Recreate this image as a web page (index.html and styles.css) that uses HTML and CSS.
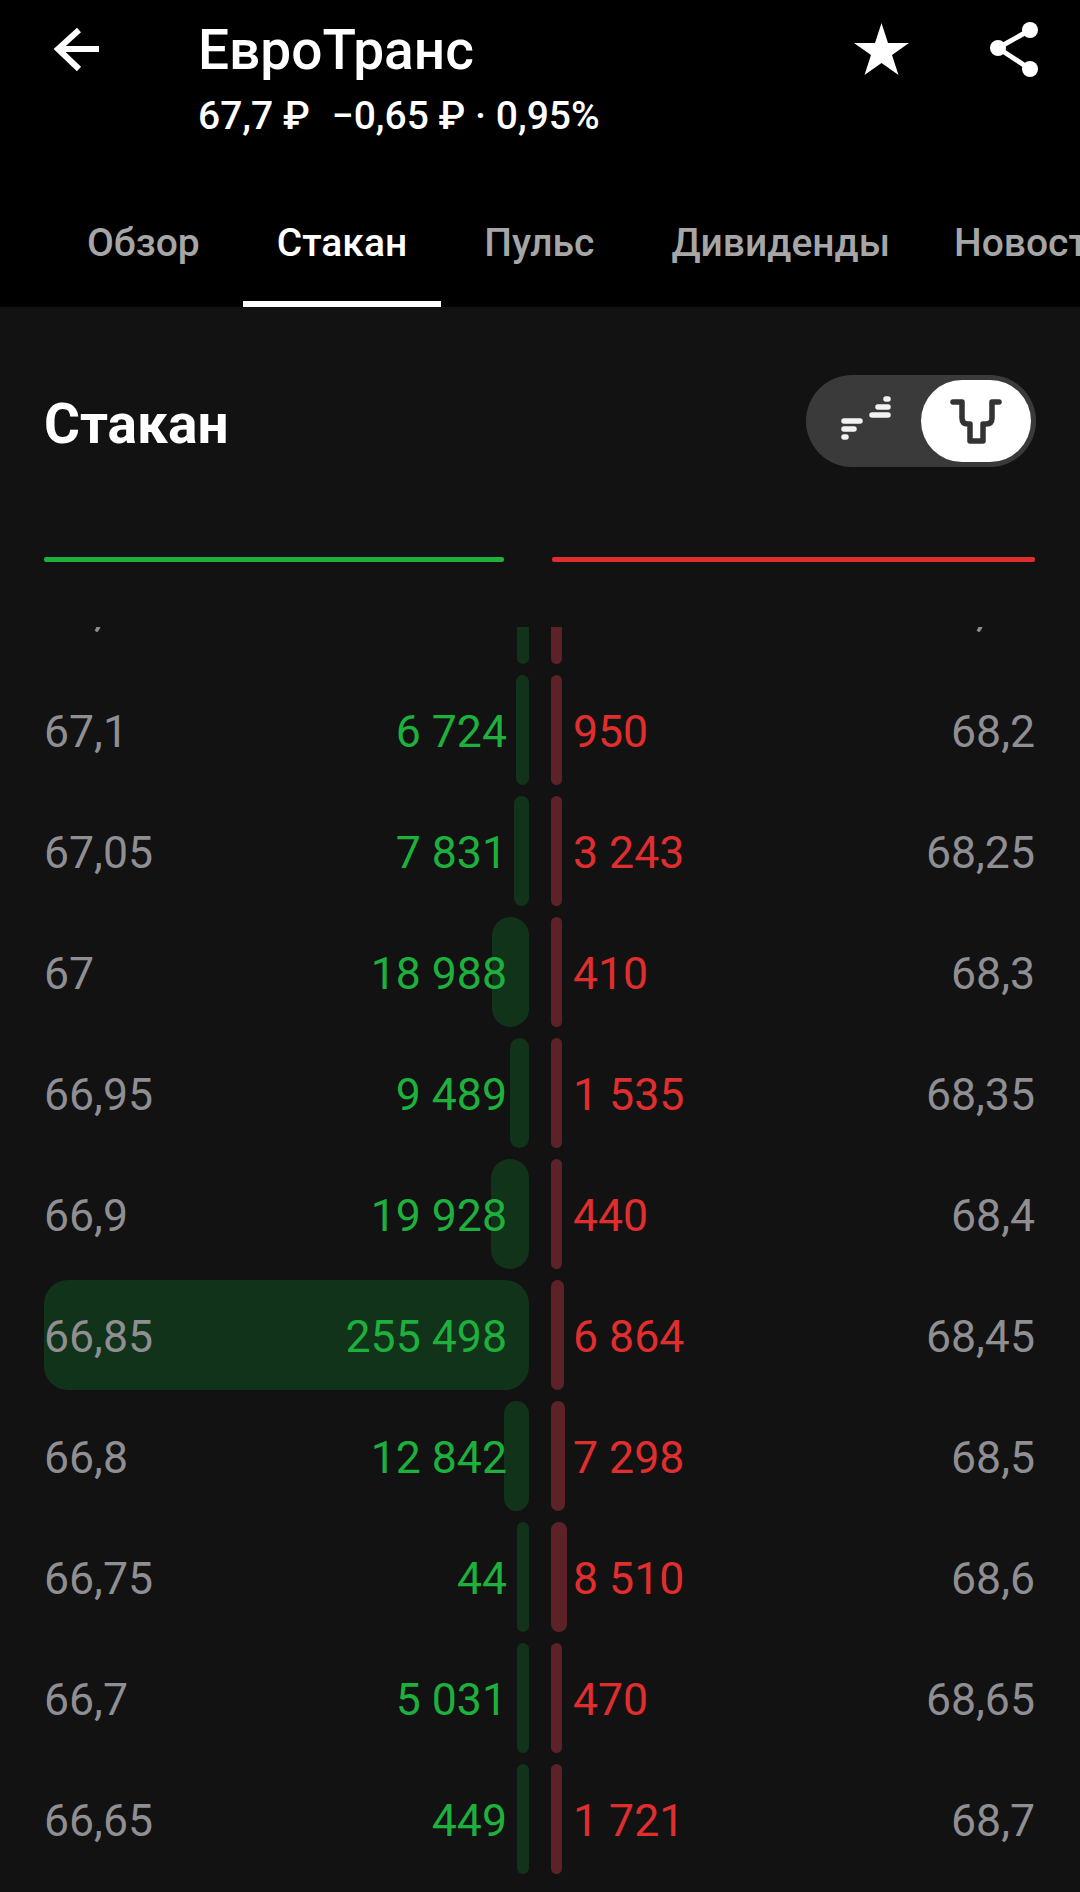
FILE: index.html
```html
<!DOCTYPE html>
<html lang="ru">
<head>
<meta charset="utf-8">
<title>ЕвроТранс — Стакан</title>
<link rel="stylesheet" href="styles.css">
</head>
<body>
<div class="page">
  <header class="header">
    <div class="top">
      <svg class="icon-back" viewBox="40 10 80 80" width="80" height="80"><path d="M99 49H58M79 30L58 49L79 69" fill="none" stroke="#fff" stroke-width="6"/></svg>
      <div class="heading">
        <div class="title">ЕвроТранс</div>
        <div class="sub"><span class="sub-price">67,7 ₽</span><span>−0,65 ₽ · 0,95%</span></div>
      </div>
      <div class="actions">
        <svg viewBox="844 10 76 80" width="76" height="80"><polygon points="881.5,23 888,43 909,43 892,55 898.5,75 881.5,63 864.5,75 871,55 854,43 875,43" fill="#fff"/></svg>
        <svg class="icon-share" viewBox="984 10 60 80" width="60" height="80"><path d="M1030 30L998 48L1030 69" fill="none" stroke="#fff" stroke-width="5"/><circle cx="1030" cy="30" r="8" fill="#fff"/><circle cx="998" cy="48" r="8" fill="#fff"/><circle cx="1030" cy="69" r="8" fill="#fff"/></svg>
      </div>
    </div>
    <nav class="tabs">
      <div class="tab">Обзор</div>
      <div class="tab tab-active">Стакан</div>
      <div class="tab">Пульс</div>
      <div class="tab tab-tight">Дивиденды</div>
      <div class="tab">Новости</div>
    </nav>
  </header>
  <main class="main">
    <div class="section-head">
      <h1 class="section-title">Стакан</h1>
      <div class="toggle">
        <div class="toggle-slot">
          <svg viewBox="836 396 60 50" width="60" height="50"><path d="M844 421H860M844 429H854M844 437H846M886 399H888M878 407H888M872 415H888" fill="none" stroke="#f2f2f2" stroke-width="5.5" stroke-linecap="round"/></svg>
        </div>
        <div class="toggle-knob">
          <svg viewBox="946 396 60 50" width="60" height="50"><path d="M953 402H962V418Q962 424 968 424H970V441H983V424H986Q992 424 992 418V402H999" fill="none" stroke="#333" stroke-width="5.5" stroke-linecap="round" stroke-linejoin="round"/></svg>
        </div>
      </div>
    </div>
    <div class="lines"><div class="line line-buy"></div><div class="line line-sell"></div></div>
    <div class="book">
      <div class="row row-first">
        <div class="side side-buy"><i class="bar bar-buy" style="width:12px"></i><span class="price">67,15</span><span class="qty"></span></div>
        <div class="side side-sell"><i class="bar bar-sell" style="width:11px"></i><span class="qty"></span><span class="price">68,15</span></div>
      </div>
      <div class="row">
        <div class="side side-buy"><i class="bar bar-buy" style="width:13px"></i><span class="price">67,1</span><span class="qty">6 724</span></div>
        <div class="side side-sell"><i class="bar bar-sell" style="width:11px"></i><span class="qty">950</span><span class="price">68,2</span></div>
      </div>
      <div class="row">
        <div class="side side-buy"><i class="bar bar-buy" style="width:15px"></i><span class="price">67,05</span><span class="qty">7 831</span></div>
        <div class="side side-sell"><i class="bar bar-sell" style="width:11px"></i><span class="qty">3 243</span><span class="price">68,25</span></div>
      </div>
      <div class="row">
        <div class="side side-buy"><i class="bar bar-buy" style="width:37px"></i><span class="price">67</span><span class="qty">18 988</span></div>
        <div class="side side-sell"><i class="bar bar-sell" style="width:11px"></i><span class="qty">410</span><span class="price">68,3</span></div>
      </div>
      <div class="row">
        <div class="side side-buy"><i class="bar bar-buy" style="width:19px"></i><span class="price">66,95</span><span class="qty">9 489</span></div>
        <div class="side side-sell"><i class="bar bar-sell" style="width:11px"></i><span class="qty">1 535</span><span class="price">68,35</span></div>
      </div>
      <div class="row">
        <div class="side side-buy"><i class="bar bar-buy" style="width:38px"></i><span class="price">66,9</span><span class="qty">19 928</span></div>
        <div class="side side-sell"><i class="bar bar-sell" style="width:11px"></i><span class="qty">440</span><span class="price">68,4</span></div>
      </div>
      <div class="row">
        <div class="side side-buy"><i class="bar bar-buy" style="width:485px"></i><span class="price">66,85</span><span class="qty">255 498</span></div>
        <div class="side side-sell"><i class="bar bar-sell" style="width:13px"></i><span class="qty">6 864</span><span class="price">68,45</span></div>
      </div>
      <div class="row">
        <div class="side side-buy"><i class="bar bar-buy" style="width:25px"></i><span class="price">66,8</span><span class="qty">12 842</span></div>
        <div class="side side-sell"><i class="bar bar-sell" style="width:14px"></i><span class="qty">7 298</span><span class="price">68,5</span></div>
      </div>
      <div class="row">
        <div class="side side-buy"><i class="bar bar-buy" style="width:12px"></i><span class="price">66,75</span><span class="qty">44</span></div>
        <div class="side side-sell"><i class="bar bar-sell" style="width:16px"></i><span class="qty">8 510</span><span class="price">68,6</span></div>
      </div>
      <div class="row">
        <div class="side side-buy"><i class="bar bar-buy" style="width:12px"></i><span class="price">66,7</span><span class="qty">5 031</span></div>
        <div class="side side-sell"><i class="bar bar-sell" style="width:11px"></i><span class="qty">470</span><span class="price">68,65</span></div>
      </div>
      <div class="row">
        <div class="side side-buy"><i class="bar bar-buy" style="width:12px"></i><span class="price">66,65</span><span class="qty">449</span></div>
        <div class="side side-sell"><i class="bar bar-sell" style="width:11px"></i><span class="qty">1 721</span><span class="price">68,7</span></div>
      </div>
    </div>
  </main>
</div>
</body>
</html>
```

FILE: styles.css
```css
* { box-sizing: border-box; }
html, body { margin: 0; padding: 0; background: #121212; }
.page { width: 1080px; height: 1892px; overflow: hidden; font-family: Roboto, "Noto Sans", sans-serif; color: #fff; }

.header { background: #000; height: 307px; }
.top { display: flex; height: 165px; padding: 10px 0 0 40px; }
.icon-back { flex: none; }
.heading { margin-left: 78px; }
.title { font-size: 55px; line-height: 60px; margin-top: 10px; font-weight: 500; }
.sub { display: flex; font-size: 39px; line-height: 42px; margin-top: 15px; font-weight: 500; }
.sub-price { margin-right: 22px; }
.actions { margin-left: auto; display: flex; padding-right: 36px; }
.actions svg { display: block; }
.icon-share { margin-left: 64px; }

.tabs { display: flex; height: 142px; padding-left: 53px; gap: 9px; overflow: hidden; }
.tab { flex: none; padding: 0 34px; height: 142px; line-height: 156px; font-size: 39px; font-weight: 500; color: #a6a6a6; }
.tab-active { color: #fff; border-bottom: 6px solid #fff; }
.tab-tight { padding-right: 21px; }

.main { padding: 68px 0 0; }
.section-head { display: flex; align-items: center; justify-content: space-between; padding: 0 44px; height: 92px; }
.section-title { margin: 6px 0 0; font-size: 55px; font-weight: 700; line-height: 60px; }
.toggle { display: flex; width: 230px; height: 92px; padding: 5px; border-radius: 46px; background: #3a3a3a; }
.toggle-slot { width: 110px; display: flex; align-items: center; justify-content: center; }
.toggle-knob { width: 110px; height: 82px; border-radius: 41px; background: #fff; display: flex; align-items: center; justify-content: center; }

.lines { display: flex; justify-content: space-between; padding: 0 45px 0 44px; margin-top: 90px; }
.line { height: 5px; border-radius: 2px; }
.line-buy { width: 460px; background: #1db03d; }
.line-sell { width: 483px; background: #e02e2e; }

.book { margin-top: 65px; height: 1265px; overflow: hidden; }
.row { display: flex; justify-content: space-between; height: 110px; margin-bottom: 11px; padding: 0 45px 0 44px; }
.row-first { margin-top: -73px; }
.side { position: relative; width: 485px; display: flex; align-items: center; justify-content: space-between; font-size: 44.6px; padding-top: 4px; }
.side-sell { width: 484px; }
.bar { position: absolute; top: 0; bottom: 0; border-radius: 24px; }
.bar-buy { right: 0; background: #11331a; }
.bar-sell { left: 0; background: #5c2228; border-radius: 8px; }
.price { position: relative; color: #8e8e93; }
.qty { position: relative; }
.side-buy .qty { color: #1db03d; padding-right: 22px; }
.side-sell .qty { color: #e02e2e; padding-left: 22px; }
```
